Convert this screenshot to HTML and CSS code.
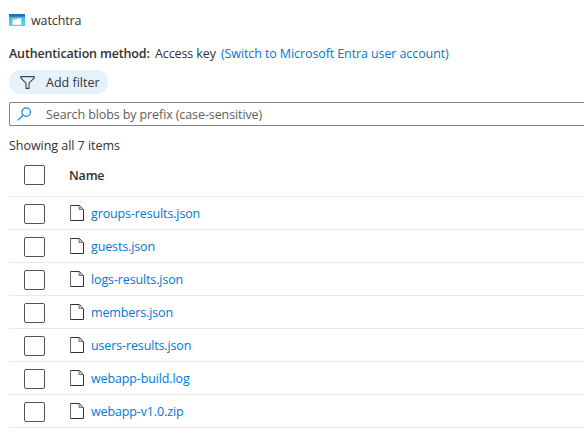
FILE: index.html
```html
<!DOCTYPE html>
<html lang="en">
<head>
<meta charset="utf-8">
<title>watchtra</title>
<link rel="stylesheet" href="styles.css">
</head>
<body>
<svg class="defs" width="0" height="0" aria-hidden="true">
  <symbol id="file" viewBox="0 0 14 16">
    <path d="M.5 15.5V.5" fill="none" stroke="#6b6967"/>
    <path d="M.5.5H9.5L13.5 4.5V15.5H.5" fill="none" stroke="#323130"/>
    <path d="M9 .5V4.5h4.5" fill="#ccc" stroke="#7a7876"/>
  </symbol>
</svg>
<main class="panel">
  <header class="location">
    <svg class="container-icon" width="16" height="12" viewBox="0 0 16 12">
      <defs><linearGradient id="sky" x1="0" y1="0" x2="0" y2="1"><stop offset="0" stop-color="#2bbfe3"/><stop offset="1" stop-color="#55d5f0"/></linearGradient></defs>
      <path fill="url(#sky)" d="M0 2h16v10H0z"/>
      <path fill="#0f74ce" d="M0 0h16v2.7H0z"/>
      <path fill="#fff" d="M3.5 4.4H12.3V10.8H3.5z"/>
      <path fill="#f5a04a" d="M3.5 4H7.6l.6.6L7.2 5.5H3.5z"/>
    </svg>
    <span class="location-name">watchtra</span>
  </header>
  <p class="auth"><strong class="auth-label">Authentication method:</strong><span class="auth-value">Access key</span><a class="auth-link">(Switch to Microsoft Entra user account)</a></p>
  <div class="filter">
    <svg width="15" height="13" viewBox="0 0 15 13"><path d="M.8.6H14.2V2L9 7.2V12.4H6V7.2L.8 2z" fill="none" stroke="#3b4450" stroke-width="1.1"/></svg>
    <span>Add filter</span>
  </div>
  <div class="search">
    <svg width="15" height="14" viewBox="0 0 15 14"><g fill="none" stroke="#1683d8" stroke-width="1.2"><circle cx="9.2" cy="5.1" r="4.3"/><path d="M6.1 8.2.8 13.4"/></g></svg>
    <span>Search blobs by prefix (case-sensitive)</span>
  </div>
  <p class="count">Showing all 7 items</p>
  <section class="list">
    <div class="row head"><span class="check"></span><strong class="column">Name</strong></div>
    <div class="row"><span class="check"></span><svg class="file"><use href="#file"/></svg><a>groups-results.json</a></div>
    <div class="row"><span class="check"></span><svg class="file"><use href="#file"/></svg><a>guests.json</a></div>
    <div class="row"><span class="check"></span><svg class="file"><use href="#file"/></svg><a>logs-results.json</a></div>
    <div class="row"><span class="check"></span><svg class="file"><use href="#file"/></svg><a>members.json</a></div>
    <div class="row"><span class="check"></span><svg class="file"><use href="#file"/></svg><a>users-results.json</a></div>
    <div class="row"><span class="check"></span><svg class="file"><use href="#file"/></svg><a>webapp-build.log</a></div>
    <div class="row"><span class="check"></span><svg class="file"><use href="#file"/></svg><a>webapp-v1.0.zip</a></div>
  </section>
</main>
</body>
</html>
```
FILE: styles.css
```css
* { box-sizing: border-box; }
body {
  margin: 0;
  background: #fff;
  color: #323130;
  font: 12.5px/18px "Open Sans", "Noto Sans", sans-serif;
  letter-spacing: -0.1px;
  white-space: nowrap;
  overflow: hidden;
}
p { margin: 0; }
svg { display: block; flex: none; }
.defs { position: absolute; }
.panel { padding: 11px 0 0 9px; }
.location { display: flex; align-items: center; gap: 6px; height: 18px; }
.location-name { padding-top: 2px; }
.auth { display: flex; margin-top: 16px; height: 18px; }
.auth-label { font-weight: 600; width: 146px; letter-spacing: -0.16px; }
.auth-value { width: 66px; }
.auth-link, .row a { color: #0078d4; }
.filter {
  display: flex;
  align-items: center;
  gap: 11px;
  width: 99px;
  height: 24px;
  margin-top: 7px;
  padding-left: 11px;
  border-radius: 12px;
  background: #e5f1fb;
}
.filter span, .search span { padding-top: 2px; }
.filter span { letter-spacing: 0; }
.search {
  display: flex;
  align-items: center;
  gap: 14px;
  height: 24px;
  margin-top: 8px;
  padding-left: 7px;
  border: 1px solid #858381;
  border-right: 0;
  border-radius: 2px 0 0 2px;
  color: #605e5c;
}
.count { margin-top: 11px; height: 18px; letter-spacing: -0.04px; }
.row {
  display: flex;
  align-items: flex-start;
  height: 33px;
  padding: 7px 0 0 15px;
  border-bottom: 1px solid #e8e8e8;
}
.row.head { height: 42px; padding-top: 10px; border-color: #f0f0f0; }
.row a { padding-top: 1px; letter-spacing: -0.13px; }
.check {
  flex: none;
  width: 21px;
  height: 20px;
  margin-right: 25px;
  border: 1px solid #55524f;
  border-radius: 2px;
}
.head .check { margin-right: 24px; }
.column { font-weight: 600; letter-spacing: -0.2px; padding-top: 2px; }
.file { width: 14px; height: 16px; margin: 1px 7px 0 0; }
```
